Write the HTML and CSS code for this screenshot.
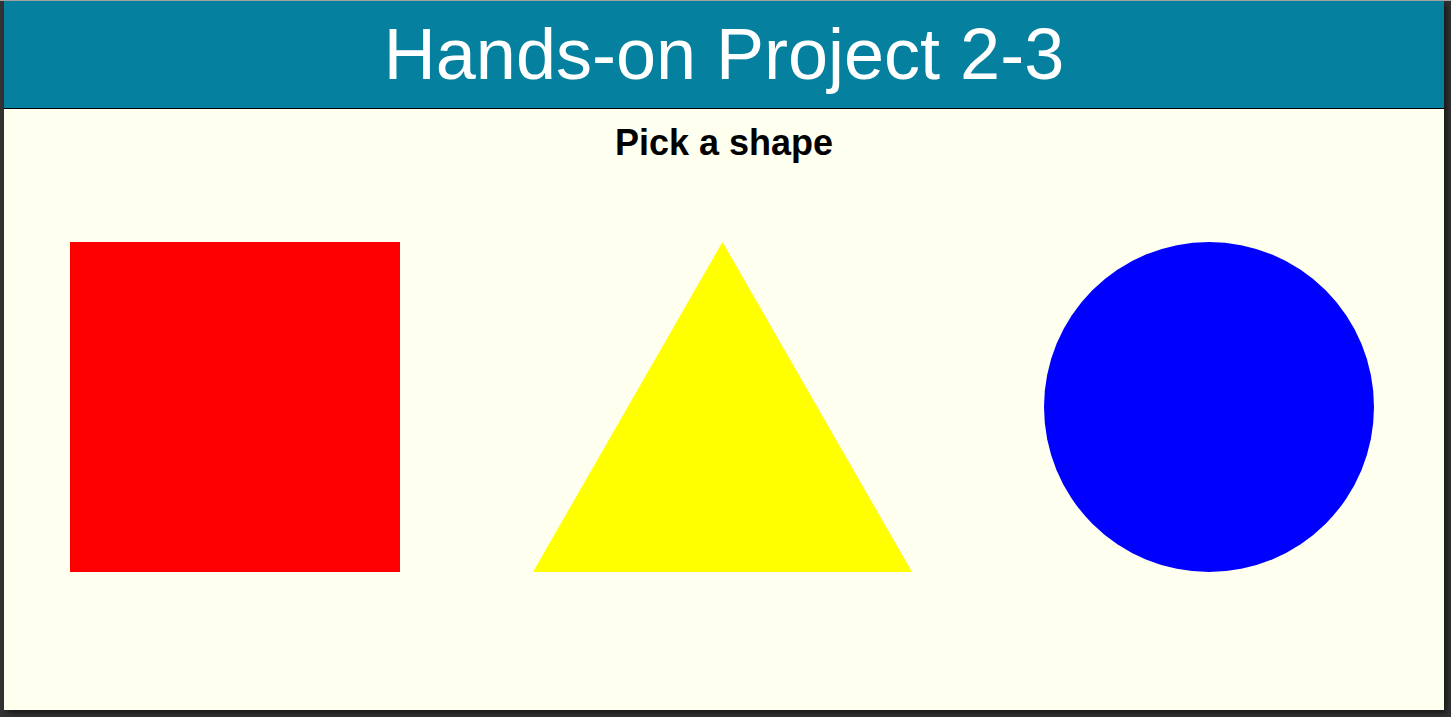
FILE: index.html
```html
<!DOCTYPE html>
<html lang="en">
<head>
<meta charset="utf-8">
<title>Hands-on Project 2-3</title>
<link rel="stylesheet" href="styles.css">
</head>
<body>
<article class="page">
  <header class="banner">
    <h1 class="title">Hands-on Project 2-3</h1>
  </header>
  <section class="content">
    <h2 class="prompt">Pick a shape</h2>
    <div class="shapes">
      <div class="square"></div>
      <svg class="triangle" width="379" height="330" viewBox="0 0 379 330" aria-label="triangle">
        <polygon points="189.5,0 379,330 0,330" fill="#ffff00"/>
      </svg>
      <div class="circle"></div>
    </div>
  </section>
</article>
</body>
</html>
```

FILE: styles.css
```css
html {
  background: #333333;
}
body {
  margin: 0;
  border-top: 1px solid #a3a3a3;
  background: #333333;
  height: 716px;
  overflow: hidden;
  font-family: "Liberation Sans", Arial, sans-serif;
}
.page {
  width: 1440px;
  height: 709px;
  margin-left: 4px;
  background: #fffff0;
  box-shadow: 3px 3px 6px rgba(0, 0, 0, 0.55);
  display: flex;
  flex-direction: column;
}
.banner {
  height: 107px;
  background: #05809e;
  border-bottom: 1px solid #000000;
}
.title {
  margin: 0;
  font-size: 72px;
  font-weight: normal;
  line-height: 107px;
  color: #ffffff;
  text-align: center;
}
.content {
  display: flex;
  flex-direction: column;
}
.prompt {
  margin: 14px 0 0;
  font-size: 36px;
  line-height: 40px;
  font-weight: bold;
  text-align: center;
  color: #000000;
}
.shapes {
  margin-top: 79px;
  padding-left: 66px;
  display: flex;
  align-items: flex-start;
}
.square {
  width: 330px;
  height: 330px;
  background: #ff0000;
}
.triangle {
  display: block;
  margin-left: 133px;
}
.circle {
  width: 330px;
  height: 330px;
  margin-left: 132px;
  border-radius: 50%;
  background: #0000ff;
}
```
